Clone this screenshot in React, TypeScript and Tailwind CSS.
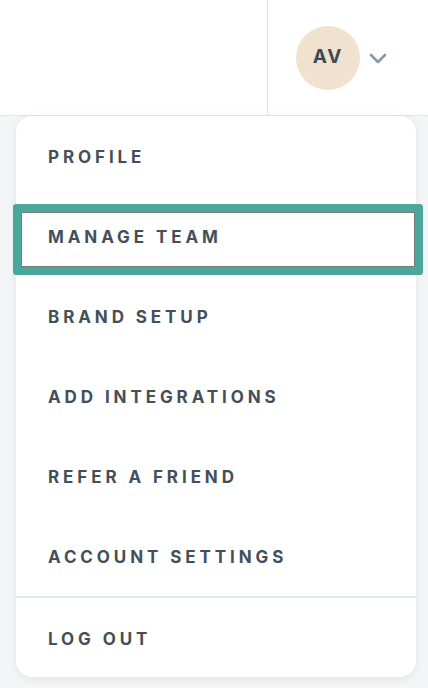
import React from "react";

const items = [
  "PROFILE",
  "MANAGE TEAM",
  "BRAND SETUP",
  "ADD INTEGRATIONS",
  "REFER A FRIEND",
  "ACCOUNT SETTINGS",
];

function Chevron() {
  return (
    <svg width="18" height="11" viewBox="0 0 18 11" fill="none">
      <path d="M2 2l7 7 7-7" stroke="#7f9bab" strokeWidth="2.6" strokeLinecap="round" strokeLinejoin="round" />
    </svg>
  );
}

export default function App() {
  return (
    <div
      className="relative w-[428px] h-[688px] bg-[#f4f5f7] overflow-hidden"
      style={{ fontFamily: "Inter, 'Liberation Sans', sans-serif" }}
    >
      <header className="flex h-[116px] bg-white border-b border-[#e3e7eb]">
        <div className="flex-1" />
        <div className="flex items-center w-[161px] border-l border-[#dde3e8] pl-[28px]">
          <div className="flex items-center justify-center w-16 h-16 rounded-full bg-[#f0e2cf] text-[19px] font-bold tracking-[0.1em] text-[#3e4a54]">
            AV
          </div>
          <div className="ml-[9px] pt-[1px]">
            <Chevron />
          </div>
        </div>
      </header>

      {/* dropdown */}
      <div className="absolute left-4 top-[116px] w-[400px] rounded-2xl bg-white shadow-[0_2px_10px_rgba(0,0,0,0.08)]">
        {items.map((label) => (
          <div key={label} className="relative flex items-center h-20 px-8 pt-1">
            {label === "MANAGE TEAM" && (
              <div className="absolute -left-[3px] -right-[7px] top-[8px] bottom-[1px] rounded-[3px] border-[8px] border-[#4aa79b] shadow-[inset_0_0_0_1px_#7a7a7a]" />
            )}
            <span className="text-[17px] font-bold tracking-[0.23em] text-[#444f59]">{label}</span>
          </div>
        ))}
        <div className="border-t-2 border-[#e3e8ec]" />
        <div className="flex items-center h-[79px] px-8 pt-1">
          <span className="text-[17px] font-bold tracking-[0.23em] text-[#444f59]">LOG OUT</span>
        </div>
      </div>
    </div>
  );
}
